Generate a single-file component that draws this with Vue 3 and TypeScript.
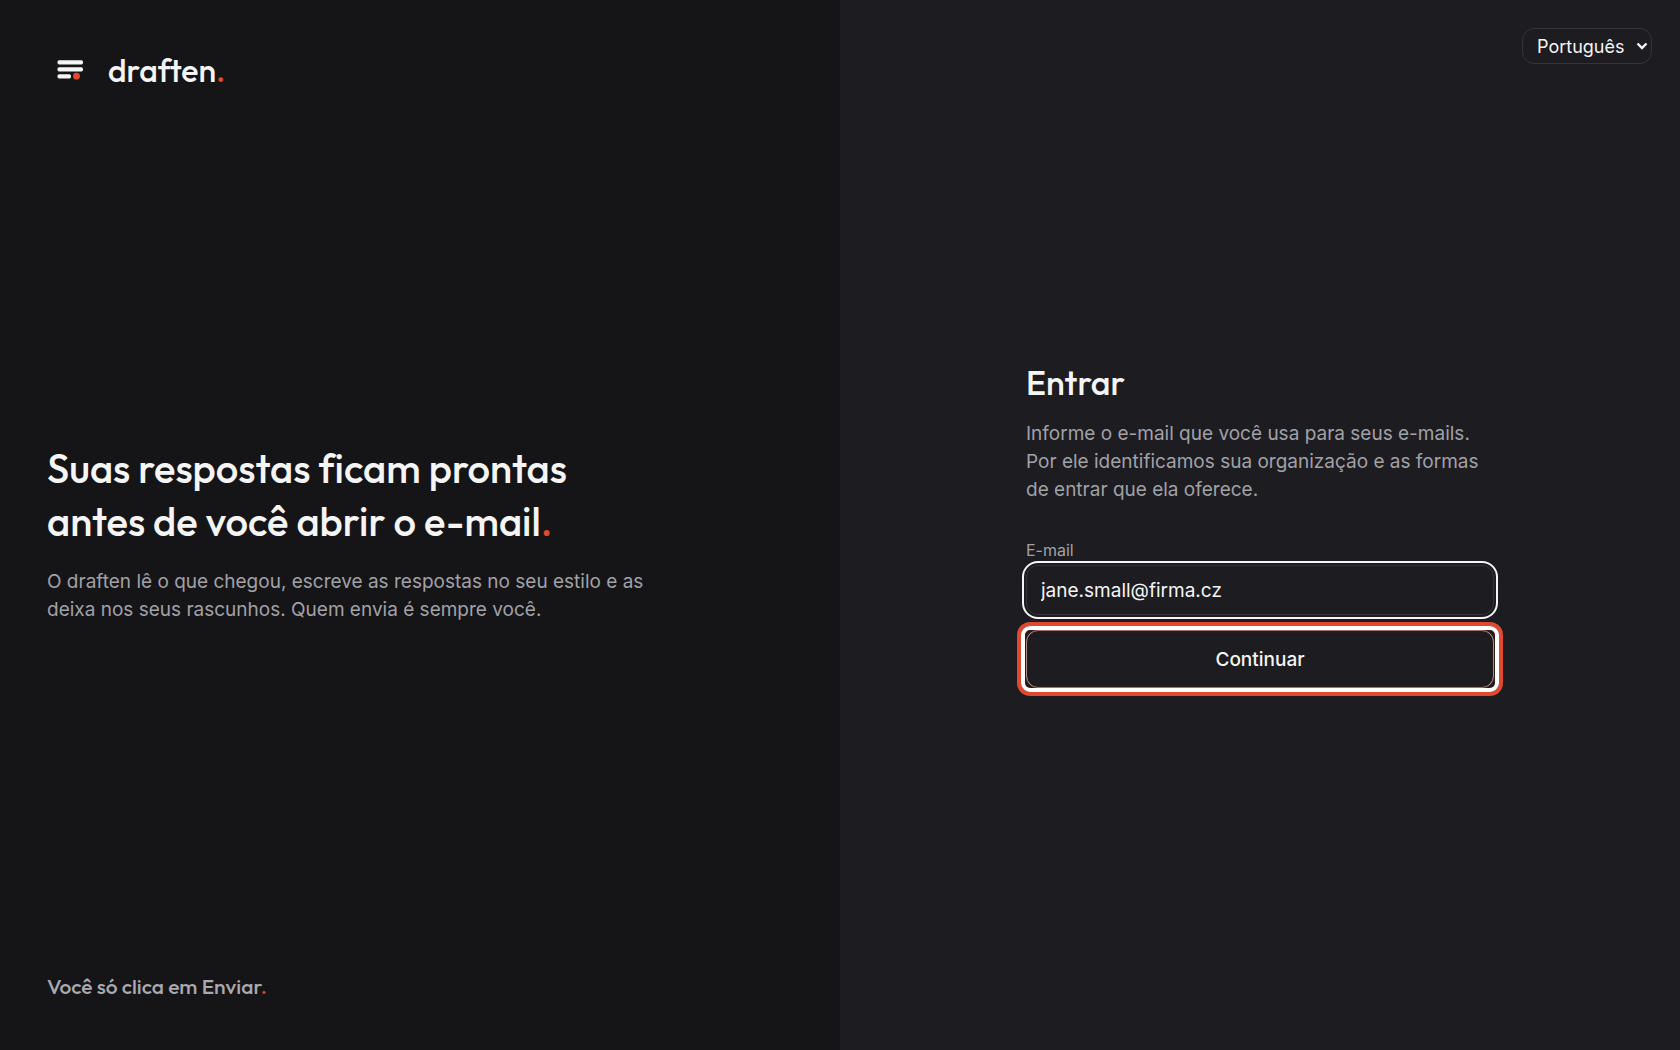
<script setup lang="ts">
import { ref } from 'vue'

const languages: string[] = ['Português', 'English', 'Čeština', 'Deutsch']
const language = ref('Português')
const email = ref('jane.small@firma.cz')
</script>

<template>
  <main class="page">
    <section class="intro">
      <div class="brand">
        <svg class="mark" viewBox="0 0 28 28" aria-hidden="true">
          <rect x="1.500" y="4.200" width="25.500" height="4.200" rx="1.600" fill="#f5f5f6" />
          <rect x="1.500" y="11.200" width="25.500" height="4.200" rx="1.600" fill="#f5f5f6" />
          <rect x="1.500" y="18.200" width="13.500" height="4.200" rx="1.600" fill="#f5f5f6" />
          <circle cx="20.500" cy="20.200" r="3.400" fill="#e0482f" />
        </svg>
        <span class="wordmark">draften<span class="dot">.</span></span>
      </div>
      <div class="pitch">
        <h1>Suas respostas ficam prontas<br />antes de você abrir o e-mail<span class="dot">.</span></h1>
        <p class="text">O draften lê o que chegou, escreve as respostas no seu estilo e as deixa nos seus rascunhos. Quem envia é sempre você.</p>
      </div>
      <p class="motto">Você só clica em Enviar<span class="dot">.</span></p>
    </section>

    <section class="login">
      <div class="language">
        <select v-model="language" aria-label="Idioma">
          <option v-for="item in languages" :key="item">{{ item }}</option>
        </select>
        <svg class="chevron" viewBox="0 0 12 8" aria-hidden="true">
          <path d="M1.500 1.500 6 6l4.500-4.500" fill="none" stroke="#f5f5f6" stroke-width="2.400" />
        </svg>
      </div>
      <form @submit.prevent>
        <h2>Entrar</h2>
        <p class="text">Informe o e-mail que você usa para seus e-mails. Por ele identificamos sua organização e as formas de entrar que ela oferece.</p>
        <label for="email">E-mail</label>
        <input id="email" v-model="email" type="email" />
        <button type="submit">Continuar</button>
      </form>
    </section>
  </main>
</template>

<style>
body {
  margin: 0;
  background: #151517;
}
</style>

<style scoped>
.page {
  display: grid;
  grid-template-columns: 1fr 1fr;
  min-height: 100vh;
  color: #f5f5f6;
  font-family: Inter, "Liberation Sans", sans-serif;
  font-size: 19px;
}
h1, h2, p {
  margin: 0;
}
h1, h2, .wordmark, .motto {
  font-family: Outfit, Lato, sans-serif;
  font-weight: 500;
}
h1 {
  font-variant-ligatures: no-common-ligatures;
}
.dot {
  color: #e0482f;
}
.text {
  color: #a1a1a8;
  line-height: 28px;
}
.intro {
  display: flex;
  flex-direction: column;
  justify-content: space-between;
  padding: 46px 47px 50px;
  background: #151517;
}
.brand {
  display: flex;
  align-items: center;
  gap: 24px;
  padding-left: 9px;
}
.mark {
  width: 28px;
  height: 28px;
}
.wordmark {
  font-size: 32px;
  line-height: 48px;
}
.pitch {
  max-width: 600px;
}
h1 {
  margin-bottom: 20px;
  font-size: 40px;
  line-height: 53px;
  white-space: nowrap;
}
.motto {
  color: #a9a9af;
  font-size: 21px;
  line-height: 28px;
}
.login {
  position: relative;
  display: flex;
  align-items: center;
  justify-content: center;
  background: #1d1c20;
}
.language {
  position: absolute;
  top: 28px;
  right: 28px;
}
select {
  width: 130px;
  height: 36px;
  padding: 0 14px;
  border: 1px solid #343338;
  border-radius: 12px;
  appearance: none;
  background: #1d1c20;
  color: #f5f5f6;
  font: inherit;
  font-size: 18px;
}
.chevron {
  position: absolute;
  top: 14px;
  right: 4px;
  width: 12px;
  height: 8px;
  pointer-events: none;
}
form {
  display: flex;
  flex-direction: column;
  width: 468px;
}
h2 {
  margin-bottom: 16px;
  font-size: 34px;
  line-height: 42px;
}
label {
  margin-top: 36px;
  padding-bottom: 5px;
  color: #a1a1a8;
  font-size: 16px;
  line-height: 20px;
}
input {
  box-sizing: border-box;
  height: 50px;
  padding: 0 14px;
  border: 1px solid #343338;
  border-radius: 12px;
  outline: 2px solid #f5f5f6;
  outline-offset: 2px;
  background: #1d1c20;
  color: #f5f5f6;
  font: inherit;
}
button {
  position: relative;
  height: 58px;
  margin-top: 15px;
  border: 1px solid #d8b9b2;
  border-radius: 12px;
  background: #1d1c20;
  color: #f5f5f6;
  font: inherit;
  font-weight: 500;
}
/* Highlight ring around the primary action */
button::after {
  content: "";
  position: absolute;
  inset: -5px -6px;
  border: 4px solid #fff;
  border-radius: 9px;
  box-shadow: 0 0 0 4px #e0482f, inset 0 0 5px #4a1a15;
}
</style>
